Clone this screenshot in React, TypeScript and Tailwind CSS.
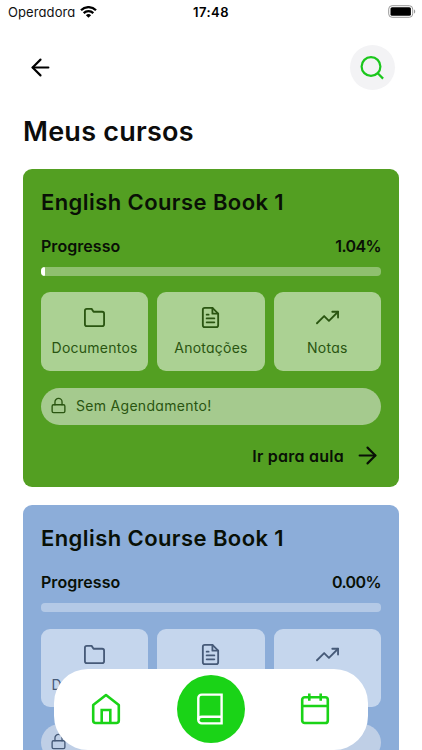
import clsx from "clsx";
import type { IconType } from "react-icons";
import { FiArrowLeft, FiArrowRight, FiFileText, FiFolder, FiLock, FiTrendingUp } from "react-icons/fi";

type Course = {
  id: number;
  title: string;
  progress: number;
  cardClass: string;
  tileClass: string;
  scheduleClass: string;
};

const courses: Course[] = [
  {
    id: 1,
    title: "English Course Book 1",
    progress: 1.04,
    cardClass: "bg-[#539f22]",
    tileClass: "bg-[#abd193] text-[#2a5511]",
    scheduleClass: "bg-[#a5ca8e] text-[#2a5511]",
  },
  {
    id: 2,
    title: "English Course Book 1",
    progress: 0,
    cardClass: "bg-[#8cadd9]",
    tileClass: "bg-[#c5d6ed] text-[#465a78]",
    scheduleClass: "bg-[#bfcfe6] text-[#465a78]",
  },
];

function StatusBar() {
  return (
    <div className="grid h-6 grid-cols-3 items-center pl-2 pr-[6px] text-[13px] leading-none text-[#111]">
      <div className="flex items-center gap-[5px]">
        <span className="tracking-[0.1px]">Operadora</span>
        <svg viewBox="0 0 17 12" className="h-3 w-[17px]" fill="none" stroke="#000" strokeWidth="2.3">
          <path d="M1 4.2a10.7 10.7 0 0 1 15 0" />
          <path d="M3.7 7.1a6.9 6.9 0 0 1 9.6 0" />
          <path d="M8.5 11.8 5.9 9.2a3.7 3.7 0 0 1 5.2 0z" fill="#000" stroke="none" />
        </svg>
      </div>
      <span className="pr-[2px] text-center font-semibold tracking-[0.5px] text-black">17:48</span>
      <svg viewBox="0 0 28 13" className="mb-[2px] h-[13px] w-7 justify-self-end">
        <rect x="0.7" y="0.7" width="24" height="11.6" rx="3.4" fill="none" stroke="#999" />
        <rect x="2.5" y="2.2" width="20.4" height="8.6" rx="1.6" />
        <path d="M26 4.5c1.6.4 1.6 3.6 0 4z" fill="#999" />
      </svg>
    </div>
  );
}

function SearchIcon() {
  return (
    <svg viewBox="0 0 26 26" className="size-[26px]" fill="none" stroke="currentColor" strokeWidth="2.2">
      <circle cx="11" cy="11.5" r="9.4" />
      <path d="m17.5 18 5.6 5.6" />
    </svg>
  );
}

function HomeIcon() {
  return (
    <svg viewBox="0 0 30 32" className="h-8 w-[30px]" fill="none" stroke="currentColor" strokeWidth="2.6" strokeLinejoin="round">
      <path d="M2.2 12 15 2l12.8 10v15.5a2.5 2.5 0 0 1-2.5 2.5H4.7a2.5 2.5 0 0 1-2.5-2.5z" />
      <path d="M10.7 30V17h8.6v13" strokeLinejoin="miter" />
    </svg>
  );
}

function BookIcon() {
  return (
    <svg viewBox="0 0 26 32" className="h-8 w-[26px]" fill="none" stroke="currentColor" strokeWidth="2.4">
      <path d="M24.6 1.6H4.8a3.5 3.5 0 0 0-3.5 3.5v21.8a3.5 3.5 0 0 0 3.5 3.5h19.8z" />
      <path d="M1.3 26.9a3.5 3.5 0 0 1 3.5-3.2h19.8" />
    </svg>
  );
}

function CalendarIcon() {
  return (
    <svg viewBox="0 0 30 32" className="h-8 w-[30px]" fill="none" stroke="currentColor" strokeWidth="2.6">
      <rect x="2.2" y="4.2" width="25.6" height="25.8" rx="2.6" />
      <path d="M2 13h26M9.3.6v7.2M20.7.6v7.2" />
    </svg>
  );
}

function CourseTile({ icon: Icon, label, className }: { icon: IconType; label: string; className: string }) {
  return (
    <button className={clsx("flex h-[78.5px] flex-col items-center rounded-[9px] pt-[14px]", className)}>
      <Icon size={23} strokeWidth={1.9} />
      <span className="mt-[9px] whitespace-nowrap text-sm leading-5 tracking-[0.25px]">{label}</span>
    </button>
  );
}

function CourseCard({ course }: { course: Course }) {
  return (
    <section className={clsx("h-[318.5px] shrink-0 rounded-[9px] px-[18px] pt-[17px] text-[#091006]", course.cardClass)}>
      <h2 className="h-8 whitespace-nowrap text-[22px] font-semibold leading-8 tracking-[0.42px]">{course.title}</h2>

      <div className="mt-4 flex h-6 items-center justify-between text-base font-semibold">
        <span className="tracking-[0.05px]">Progresso</span>
        <span className="tracking-[-0.6px]">{course.progress.toFixed(2)}%</span>
      </div>
      <div className="mt-[9px] h-[9px] overflow-hidden rounded-[4px] bg-white/35">
        <div className="h-full rounded-[1px] bg-white" style={{ width: `${course.progress}%` }} />
      </div>

      <div className="mt-[16.5px] grid grid-cols-3 gap-[9px]">
        <CourseTile icon={FiFolder} label="Documentos" className={course.tileClass} />
        <CourseTile icon={FiFileText} label="Anotações" className={course.tileClass} />
        <CourseTile icon={FiTrendingUp} label="Notas" className={course.tileClass} />
      </div>

      <div className={clsx("mt-[17px] flex h-[37px] items-center rounded-full pl-[9px]", course.scheduleClass)}>
        <FiLock size={17} strokeWidth={1.9} className="mb-[2px]" />
        <span className="ml-[9px] text-sm tracking-[0.3px]">Sem Agendamento!</span>
      </div>

      <button className="ml-auto mt-[18px] flex h-[26px] items-center gap-[10px] text-base font-semibold">
        <span className="tracking-[0.25px]">Ir para aula</span>
        <FiArrowRight size={27} strokeWidth={1.9} />
      </button>
    </section>
  );
}

function BottomNav() {
  return (
    <nav className="absolute bottom-0 left-[54px] flex h-[81px] w-[314px] items-center rounded-[34px] bg-white pb-px pr-[2px] text-[#1ad317]">
      <button className="flex flex-1 justify-center pr-[20px]">
        <HomeIcon />
      </button>
      <button className="mr-px flex size-[68px] items-center justify-center rounded-full bg-[#1ad317] pr-[2px] text-white">
        <BookIcon />
      </button>
      <button className="flex flex-1 justify-center pl-[17px]">
        <CalendarIcon />
      </button>
    </nav>
  );
}

export default function App() {
  return (
    <main className="relative h-[750px] w-full overflow-hidden bg-white font-['Inter',sans-serif] [font-feature-settings:'cv11']">
      <StatusBar />
      <header className="mt-[21px] flex items-center justify-between pl-[27px] pr-[27px]">
        <FiArrowLeft size={27} strokeWidth={1.9} />
        <button className="flex size-[45px] items-center justify-center rounded-full bg-[#f3f3f5] text-[#1bc71c]">
          <SearchIcon />
        </button>
      </header>
      <h1 className="ml-[23px] mt-[22px] h-10 text-[27px] font-semibold leading-10 tracking-[0.25px] text-[#0c0c0c]">
        Meus cursos
      </h1>
      <div className="mt-[16.5px] flex flex-col gap-[18px] px-[23px]">
        {courses.map((course) => (
          <CourseCard key={course.id} course={course} />
        ))}
      </div>
      <BottomNav />
    </main>
  );
}
